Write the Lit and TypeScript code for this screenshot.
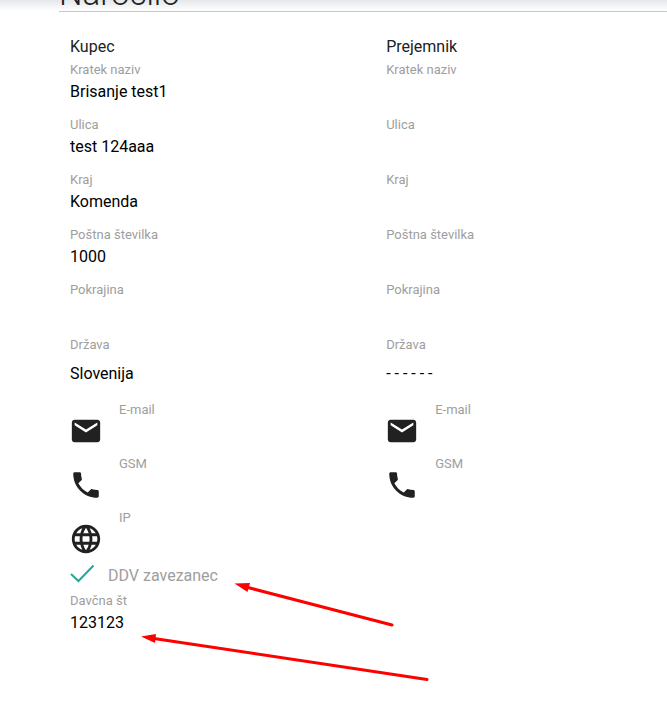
import { LitElement, html, css, svg, nothing } from "lit";
import { customElement, property } from "lit/decorators.js";

const icons = {
  mail: "M20 4H4c-1.100 0-1.990.9-1.990 2L2 18c0 1.100.9 2 2 2h16c1.100 0 2-.9 2-2V6c0-1.100-.9-2-2-2zm0 4l-8 5-8-5V6l8 5 8-5v2z",
  phone:
    "M6.620 10.790c1.440 2.830 3.760 5.140 6.590 6.590l2.200-2.200c.27-.27.67-.36 1.020-.24 1.120.37 2.330.57 3.570.57.55 0 1 .45 1 1V20c0 .55-.45 1-1 1-9.390 0-17-7.610-17-17 0-.55.45-1 1-1h3.500c.55 0 1 .45 1 1 0 1.250.2 2.450.57 3.570.11.35.03.74-.25 1.020l-2.200 2.200z",
  globe:
    "M11.990 2C6.470 2 2 6.480 2 12s4.470 10 9.990 10C17.520 22 22 17.520 22 12S17.520 2 11.990 2zm6.930 6h-2.950c-.32-1.250-.78-2.450-1.380-3.560 1.840.63 3.370 1.910 4.330 3.560zM12 4.040c.83 1.200 1.480 2.530 1.910 3.960h-3.820c.43-1.430 1.080-2.760 1.910-3.960zM4.260 14C4.100 13.360 4 12.690 4 12s.1-1.360.26-2h3.380c-.08.66-.14 1.320-.14 2 0 .68.06 1.340.14 2H4.260zm.82 2h2.950c.32 1.250.78 2.450 1.380 3.560-1.840-.63-3.370-1.900-4.330-3.560zm2.950-8H5.080c.96-1.660 2.490-2.930 4.330-3.560C8.810 5.550 8.350 6.750 8.030 8zM12 19.960c-.83-1.200-1.480-2.530-1.910-3.960h3.820c-.43 1.430-1.080 2.760-1.910 3.960zM14.340 14H9.660c-.09-.66-.16-1.320-.16-2 0-.68.07-1.350.16-2h4.680c.09.65.16 1.320.16 2 0 .68-.07 1.340-.16 2zm.25 5.560c.6-1.110 1.060-2.310 1.380-3.560h2.950c-.96 1.650-2.490 2.930-4.330 3.560zM16.360 14c.08-.66.14-1.320.14-2 0-.68-.06-1.340-.14-2h3.380c.16.64.26 1.310.26 2s-.1 1.360-.26 2h-3.380z",
};

type IconName = keyof typeof icons;

interface Party {
  title: string;
  fields: [string, string][];
  country: string;
  contacts: [string, IconName][];
}

const buyer: Party = {
  title: "Kupec",
  fields: [
    ["Kratek naziv", "Brisanje test1"],
    ["Ulica", "test 124aaa"],
    ["Kraj", "Komenda"],
    ["Poštna številka", "1000"],
    ["Pokrajina", ""],
  ],
  country: "Slovenija",
  contacts: [
    ["E-mail", "mail"],
    ["GSM", "phone"],
    ["IP", "globe"],
  ],
};

const recipient: Party = {
  title: "Prejemnik",
  fields: [
    ["Kratek naziv", ""],
    ["Ulica", ""],
    ["Kraj", ""],
    ["Poštna številka", ""],
    ["Pokrajina", ""],
  ],
  country: "- - - - - -",
  contacts: [
    ["E-mail", "mail"],
    ["GSM", "phone"],
  ],
};

@customElement("party-form")
export class PartyForm extends LitElement {
  @property({ attribute: false }) party!: Party;
  @property() taxNumber?: string;

  static styles = css`
    :host {
      display: block;
      min-width: 0;
      padding: 0 11px;
      color: #000;
    }
    .title {
      margin: 0 0 3px;
      font-size: 16px;
      font-weight: 400;
      line-height: 24px;
      color: #212121;
    }
    .field {
      display: flex;
      flex-direction: column;
      gap: 2px;
      margin-bottom: 13px;
    }
    .label {
      font-size: 13px;
      line-height: 16px;
      color: #9e9e9e;
    }
    .control {
      display: block;
      box-sizing: border-box;
      width: 100%;
      height: 24px;
      margin: 0;
      padding: 0;
      border: 0;
      border-radius: 0;
      outline: 0;
      background: none;
      appearance: none;
      font: inherit;
      font-size: 16px;
      line-height: 24px;
      color: inherit;
    }
    .country {
      gap: 9px;
      margin-bottom: 16px;
    }
    .contact {
      display: grid;
      grid-template-columns: 34px 1fr;
      grid-template-rows: 16px 24px;
      column-gap: 15px;
      row-gap: 6px;
      margin-bottom: 8px;
    }
    .icon {
      grid-row: 1 / 3;
      align-self: end;
      width: 34px;
      height: 34px;
      margin-left: -1px;
      fill: #212121;
    }
    .check {
      display: flex;
      align-items: center;
      height: 24px;
      font-size: 16px;
      line-height: 24px;
      color: #9e9e9e;
    }
    .box {
      width: 0;
      height: 0;
      margin: 0;
      appearance: none;
    }
    .mark {
      width: 24px;
      height: 24px;
      margin-right: 14px;
      fill: none;
      stroke: #26a69a;
      stroke-width: 2;
      visibility: hidden;
    }
    .box:checked + .mark {
      visibility: visible;
    }
    .tax {
      margin: 5px 0 0;
    }
  `;

  render() {
    const { title, fields, country, contacts } = this.party;
    return html`
      <h2 class="title">${title}</h2>
      ${fields.map(
        ([label, value]) => html`
          <label class="field">
            <span class="label">${label}</span>
            <input class="control" type="text" .value=${value} />
          </label>
        `
      )}
      <label class="field country">
        <span class="label">Država</span>
        <select class="control">
          <option>${country}</option>
        </select>
      </label>
      ${contacts.map(
        ([label, icon]) => html`
          <label class="contact">
            <svg class="icon" viewBox="0 0 24 24" aria-hidden="true">
              ${svg`<path d=${icons[icon]} />`}
            </svg>
            <span class="label">${label}</span>
            <input class="control" type="text" />
          </label>
        `
      )}
      ${this.taxNumber
        ? html`
            <label class="check">
              <input class="box" type="checkbox" checked />
              <svg class="mark" viewBox="0 0 24 24" aria-hidden="true">
                <path d="M1 10 L8.500 17 L23.500 1.500" />
              </svg>
              DDV zavezanec
            </label>
            <label class="field tax">
              <span class="label">Davčna št</span>
              <input class="control" type="text" .value=${this.taxNumber} />
            </label>
          `
        : nothing}
    `;
  }
}

@customElement("app-root")
export class AppRoot extends LitElement {
  static styles = css`
    :host {
      display: block;
      position: relative;
      min-height: 100vh;
      overflow: hidden;
      background: linear-gradient(#e6e7ea, #fff 11px);
      font-family: Roboto, "Liberation Sans", sans-serif;
    }
    .page {
      margin-left: 59px;
    }
    .header {
      display: flex;
      align-items: flex-end;
      height: 11px;
      border-bottom: 1px solid #c8c8c8;
    }
    .heading {
      margin: 0;
      font-size: 33px;
      font-weight: 300;
      line-height: 34px;
      color: #212121;
    }
    .parties {
      display: grid;
      grid-template-columns: 13fr 12fr;
      padding-top: 23px;
    }
    .arrows {
      position: absolute;
      top: 570px;
      left: 130px;
      width: 310px;
      height: 120px;
      pointer-events: none;
      fill: #f00;
      stroke: #f00;
    }
    .shaft {
      stroke-width: 3;
      stroke-linecap: round;
    }
    .head {
      stroke: none;
    }
  `;

  render() {
    return html`
      <main class="page">
        <header class="header"><h1 class="heading">Naročilo</h1></header>
        <form class="parties">
          <party-form .party=${buyer} .taxNumber=${"123123"}></party-form>
          <party-form .party=${recipient}></party-form>
        </form>
      </main>
      <svg class="arrows" viewBox="0 0 310 120" aria-hidden="true">
        <path class="shaft" d="M116 17 L262 55" />
        <path class="head" d="M104.500 13.500 L120 13 L117.500 22 Z" />
        <path class="shaft" d="M24 68.500 L297 109.500" />
        <path class="head" d="M11 66.500 L26 64 L25 73 Z" />
      </svg>
    `;
  }
}
